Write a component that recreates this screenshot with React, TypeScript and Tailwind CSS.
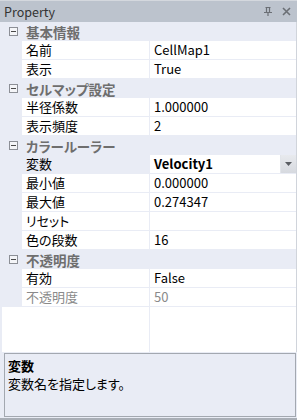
import React from "react";

type Item = { kind: "cat"; label: string } | { kind: "row"; name: string; value: string; selected?: boolean; disabled?: boolean; dropdown?: boolean };

const items: Item[] = [
  { kind: "cat", label: "基本情報" },
  { kind: "row", name: "名前", value: "CellMap1" },
  { kind: "row", name: "表示", value: "True" },
  { kind: "cat", label: "セルマップ設定" },
  { kind: "row", name: "半径係数", value: "1.000000" },
  { kind: "row", name: "表示頻度", value: "2" },
  { kind: "cat", label: "カラールーラー" },
  { kind: "row", name: "変数", value: "Velocity1", selected: true, dropdown: true },
  { kind: "row", name: "最小値", value: "0.000000" },
  { kind: "row", name: "最大値", value: "0.274347" },
  { kind: "row", name: "リセット", value: "" },
  { kind: "row", name: "色の段数", value: "16" },
  { kind: "cat", label: "不透明度" },
  { kind: "row", name: "有効", value: "False" },
  { kind: "row", name: "不透明度", value: "50", disabled: true },
];

function Minus() {
  return (
    <svg width="9" height="9" viewBox="0 0 9 9" className="block">
      <rect x="0.5" y="0.5" width="8" height="8" fill="#f4f5f8" stroke="#8c8f96" />
      <line x1="2" y1="4.5" x2="7" y2="4.5" stroke="#4a4a4a" />
    </svg>
  );
}

export default function App() {
  return (
    <div className="w-[297px] h-[420px] bg-[#E9ECF5] flex flex-col font-['Noto_Sans_CJK_JP',sans-serif] [font-feature-settings:'palt'] text-[13px] leading-[18px] text-black border-b-2 border-[#A9AEB6] overflow-hidden">
      {/* title bar */}
      <div className="h-[22px] shrink-0 bg-[#BCC3CD] border-t border-[#D4D8DE] flex items-center pl-[4px] pr-[3px]">
        <span className="text-[12.5px] text-[#333333] flex-1">Property</span>
        <svg width="8" height="9" viewBox="0 0 8 9" className="mr-[10px]">
          <path d="M1.5 0.5 H6.5 M2.5 0.5 V5.5 M5.5 0.5 V5.5 M0 5.5 H8 M4 5.5 V9" stroke="#6b6f75" strokeWidth="1.2" fill="none" />
        </svg>
        <svg width="9" height="9" viewBox="0 0 9 9" className="mr-[3px]">
          <path d="M1 1 L8 8 M8 1 L1 8" stroke="#6b6f75" strokeWidth="1.6" />
        </svg>
      </div>

      {/* grid */}
      <div className="flex flex-col flex-1 ml-[2px] border-r border-[#D0D4DB]">
        {items.map((it, i) =>
          it.kind === "cat" ? (
            <div key={i} className="h-[19px] flex items-center bg-[#E9ECF5]">
              <div className="w-[20px] flex justify-center pl-[2px]">
                <Minus />
              </div>
              <span className="pl-[4px] font-bold text-[13.5px] text-[#6E6E6E]">{it.label}</span>
            </div>
          ) : (
            <div key={i} className="h-[19px] flex">
              <div className="w-[20px] shrink-0" />
              <div
                className={
                  "w-[128px] shrink-0 flex items-center pl-[4px] border-b border-r border-[#E9ECF5] " +
                  (it.selected ? "bg-[#E9ECF5]" : "bg-white") +
                  (it.disabled ? " text-[#8a8a8a]" : "")
                }
              >
                {it.name}
              </div>
              <div className="flex-1 flex items-center bg-white border-b border-[#E9ECF5]">
                <span
                  className={
                    "flex-1 pl-[4px] " +
                    (it.selected ? "font-bold" : "") +
                    (it.disabled ? " text-[#8a8a8a]" : "")
                  }
                >
                  {it.value}
                </span>
                {it.dropdown && (
                  <div className="w-[16px] h-full bg-gradient-to-b from-[#E8EAEE] to-[#D6D9DF] border-l border-[#E2E5EA] flex items-center justify-center">
                    <svg width="7" height="4" viewBox="0 0 7 4">
                      <path d="M0 0 H7 L3.5 4 Z" fill="#5a5d63" />
                    </svg>
                  </div>
                )}
              </div>
            </div>
          )
        )}
        <div className="flex-1 flex bg-white">
          <div className="w-[148px] shrink-0 border-r border-[#E9ECF5]" />
          <div className="flex-1" />
        </div>
      </div>

      {/* description */}
      <div className="h-[64px] shrink-0 mt-[1px] mb-[1px] ml-[4px] mr-[1px] border border-[#A3A8B0] bg-[#E9ECF5] px-[3px] pt-[3px] flex flex-col">
        <div className="font-bold leading-[18px]">変数</div>
        <div className="leading-[18px]">変数名を指定します。</div>
      </div>
    </div>
  );
}
